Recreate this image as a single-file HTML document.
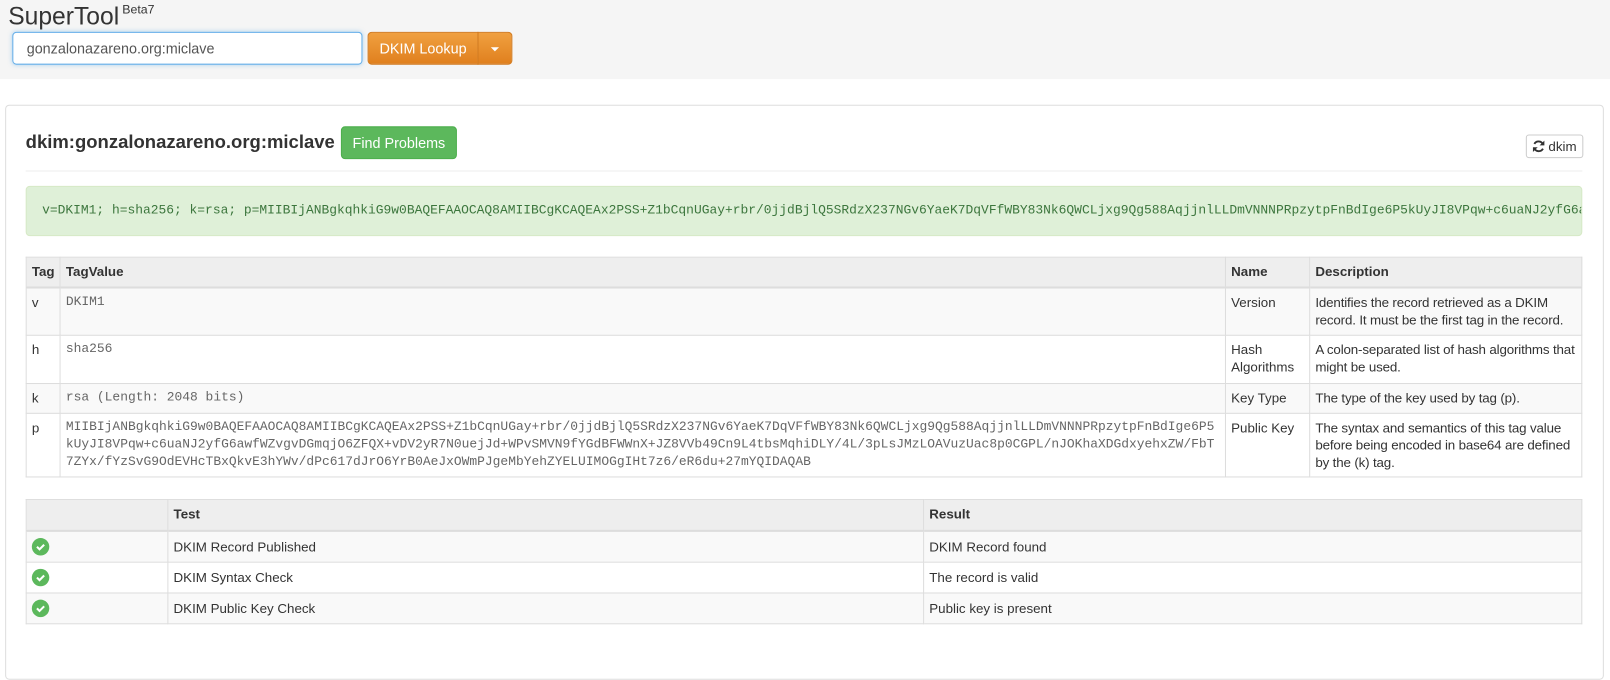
<!DOCTYPE html>
<html><head><meta charset="utf-8"><style>
*{box-sizing:border-box}
body{margin:0;width:1610px;height:634px;overflow:hidden;background:#fff;font-family:"Liberation Sans",Arial,sans-serif;font-size:13px;color:#333}
#w{position:absolute;left:0;top:0;width:1568px;height:618px;transform:scale(1.0268);transform-origin:0 0}
.top{position:absolute;left:0;top:0;width:1568px;height:77px;background:#f5f5f5}
.brand{position:absolute;left:8px;top:3px;font-size:24px;color:#333}
.brand sup{font-size:12px;position:relative;top:-2px;margin-left:3px}
.inp{position:absolute;left:12px;top:31px;width:341px;height:32px;border:1px solid #66afe9;border-radius:4px;background:#fff;padding:0 0 0 13px;line-height:30px;font-size:14px;color:#555;box-shadow:0 0 4px rgba(102,175,233,.5)}
.ob{position:absolute;top:31px;height:32px;background:linear-gradient(#f0a040,#e0801e);border:1px solid #d27a1e;color:#fff;font-size:14px;line-height:30px;text-align:center}
.panel{position:absolute;left:5px;top:102px;width:1557px;height:560px;border:1px solid #ddd;border-radius:4px}
h3{position:absolute;left:25px;top:128px;margin:0;font-size:18px;font-weight:bold;color:#333}
.fp{position:absolute;left:332px;top:123px;width:113px;height:32px;background:#5cb85c;border:1px solid #4cae4c;border-radius:4px;color:#fff;font-size:14px;line-height:30px;text-align:center}
.dk{position:absolute;left:1486px;top:131px;width:56px;height:23px;border:1px solid #ccc;border-radius:3px;font-size:13px;line-height:21px;padding-left:21px;background:#fff}
.hr{position:absolute;left:25px;top:166px;width:1516px;height:1px;background:#eee}
.alert{position:absolute;left:25px;top:181px;width:1516px;height:49px;background:#dff0d8;border:1px solid #d6e9c6;border-radius:4px;color:#3c763d;font-family:"Liberation Mono",monospace;font-size:12.6px;line-height:47px;padding-left:15px;white-space:nowrap;overflow:hidden}
table{position:absolute;border-collapse:collapse;left:25px;width:1516px}
td,th{border:1px solid #ddd;padding:5px 5px;vertical-align:top;text-align:left;line-height:17px}
td.d{letter-spacing:-0.15px}
th{background:#eee;font-weight:bold;border-bottom:2px solid #ddd}
tr.s td{background:#f9f9f9}
.m{font-family:"Liberation Mono",monospace;font-size:12.6px;color:#666;line-height:17px;word-break:break-all}
.t td{vertical-align:middle;padding-top:4px;padding-bottom:4px}
.ck{display:inline-block;width:17px;height:17px;border-radius:50%;background:#5cb85c;position:relative;top:2px}
</style></head><body><div id="w">
<div class="top">
<div class="brand">SuperTool<sup>Beta7</sup></div>
<div class="inp">gonzalonazareno.org:miclave</div>
<div class="ob" style="left:358px;width:108px;border-radius:4px 0 0 4px">DKIM Lookup</div>
<div class="ob" style="left:465px;width:34px;border-radius:0 4px 4px 0"><span style="display:inline-block;border-left:4px solid transparent;border-right:4px solid transparent;border-top:4px solid #fff;vertical-align:middle"></span></div>
</div>
<div class="panel"></div>
<h3>dkim:gonzalonazareno.org:miclave</h3>
<div class="fp">Find Problems</div>
<div class="dk"><svg style="position:absolute;left:5px;top:4px" width="13" height="13" viewBox="0 0 14 14"><path d="M11.5 5A5 5 0 0 0 2.5 4.5M2.5 9A5 5 0 0 0 11.5 9.5" fill="none" stroke="#333" stroke-width="2"/><path d="M13 1v5H8z M1 13V8h5z" fill="#333"/></svg>dkim</div>
<div class="hr"></div>
<div class="alert">v=DKIM1; h=sha256; k=rsa; p=MIIBIjANBgkqhkiG9w0BAQEFAAOCAQ8AMIIBCgKCAQEAx2PSS+Z1bCqnUGay+rbr/0jjdBjlQ5SRdzX237NGv6YaeK7DqVFfWBY83Nk6QWCLjxg9Qg588AqjjnlLLDmVNNNPRpzytpFnBdIge6P5kUyJI8VPqw+c6uaNJ2yfG6awfWZvgvDGmqjO6ZFQX</div>
<table style="top:250px">
<tr><th style="width:31px;height:29px">Tag</th><th>TagValue</th><th style="width:82px">Name</th><th style="width:265px">Description</th></tr>
<tr class="s"><td style="height:47px">v</td><td class="m">DKIM1</td><td>Version</td><td class="d">Identifies the record retrieved as a DKIM record. It must be the first tag in the record.</td></tr>
<tr><td style="height:47px">h</td><td class="m">sha256</td><td>Hash Algorithms</td><td class="d">A colon-separated list of hash algorithms that might be used.</td></tr>
<tr class="s"><td style="height:29px">k</td><td class="m">rsa (Length: 2048 bits)</td><td>Key Type</td><td class="d">The type of the key used by tag (p).</td></tr>
<tr><td>p</td><td class="m">MIIBIjANBgkqhkiG9w0BAQEFAAOCAQ8AMIIBCgKCAQEAx2PSS+Z1bCqnUGay+rbr/0jjdBjlQ5SRdzX237NGv6YaeK7DqVFfWBY83Nk6QWCLjxg9Qg588AqjjnlLLDmVNNNPRpzytpFnBdIge6P5kUyJI8VPqw+c6uaNJ2yfG6awfWZvgvDGmqjO6ZFQX+vDV2yR7N0uejJd+WPvSMVN9fYGdBFWWnX+JZ8VVb49Cn9L4tbsMqhiDLY/4L/3pLsJMzLOAVuzUac8p0CGPL/nJOKhaXDGdxyehxZW/FbT7ZYx/fYzSvG9OdEVHcTBxQkvE3hYWv/dPc617dJrO6YrB0AeJxOWmPJgeMbYehZYELUIMOGgIHt7z6/eR6du+27mYQIDAQAB</td><td>Public Key</td><td class="d">The syntax and semantics of this tag value before being encoded in base64 are defined by the (k) tag.</td></tr>
</table>
<table class="t" style="top:486px">
<tr><th style="width:138px;height:30px"></th><th style="width:736px">Test</th><th>Result</th></tr>
<tr class="s"><td style="height:30px"><span class="ck"><svg width="17" height="17"><path d="M5 8.5l2.5 2.5 4.5-4.5" fill="none" stroke="#fff" stroke-width="2"/></svg></span></td><td>DKIM Record Published</td><td>DKIM Record found</td></tr>
<tr><td style="height:30px"><span class="ck"><svg width="17" height="17"><path d="M5 8.5l2.5 2.5 4.5-4.5" fill="none" stroke="#fff" stroke-width="2"/></svg></span></td><td>DKIM Syntax Check</td><td>The record is valid</td></tr>
<tr class="s"><td style="height:29px"><span class="ck"><svg width="17" height="17"><path d="M5 8.5l2.5 2.5 4.5-4.5" fill="none" stroke="#fff" stroke-width="2"/></svg></span></td><td>DKIM Public Key Check</td><td>Public key is present</td></tr>
</table>
</div></body></html>
